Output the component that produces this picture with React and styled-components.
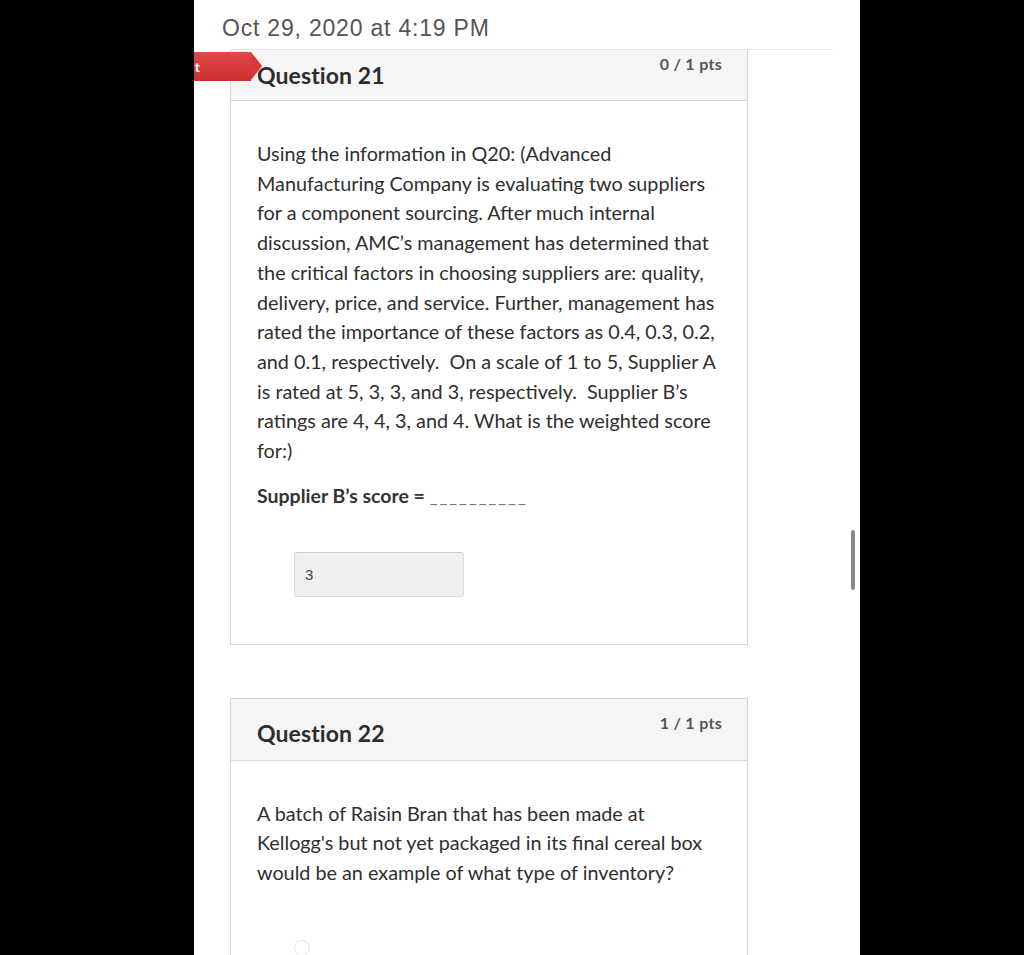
import React from 'react'
import styled, { createGlobalStyle } from 'styled-components'

const Global = createGlobalStyle`
  html, body {
    margin: 0;
    background: #000;
  }
`

const Page = styled.div`
  display: flex;
  height: 955px;
  overflow: hidden;
  background: #000;
`

const Column = styled.main`
  position: relative;
  margin-left: 194px;
  width: 666px;
  background: #fff;
  overflow: hidden;
`

const DateBar = styled.div`
  height: 41px;
  padding: 8px 0 0 28px;
  display: flex;
  align-items: center;
  font-family: 'Liberation Sans', Arial, sans-serif;
  font-size: 23px;
  letter-spacing: 0.8px;
  color: #555;
`

const Divider = styled.div`
  margin-left: 36px;
  width: 603px;
  height: 1px;
  background: #e6e6e6;
`

const Card = styled.section`
  position: relative;
  margin-left: 36px;
  width: 516px;
  border: 1px solid #d6d6d6;
  border-top: ${({ clipped }) => (clipped ? 'none' : '1px solid #d6d6d6')};
  margin-top: ${({ gap }) => gap || 0}px;
  font-family: Lato, 'Open Sans', sans-serif;
  color: #333;
`

const CardHeader = styled.header`
  display: flex;
  justify-content: space-between;
  height: ${({ clipped }) => (clipped ? 50 : 61)}px;
  padding: 0 25px 0 26px;
  background: #f5f5f5;
  border-bottom: 1px solid #d9d9d9;
`

const Title = styled.h2`
  margin: 0;
  padding-top: ${({ clipped }) => (clipped ? 11 : 20)}px;
  font-size: 23px;
  font-weight: 700;
  color: #2d2d2d;
  letter-spacing: 0.1px;
`

const Points = styled.div`
  padding-top: ${({ clipped }) => (clipped ? 4 : 14)}px;
  font-size: 16px;
  font-weight: 700;
  color: #555;
  letter-spacing: 0.3px;
`

// "Incorrect" ribbon, mostly cut off by the left edge of the column
const Flag = styled.div`
  position: absolute;
  left: -80px;
  top: 2px;
  height: 29px;
  width: 88px;
  padding-right: 12px;
  display: flex;
  align-items: center;
  justify-content: flex-end;
  background: linear-gradient(#e04a48, #c9302f);
  color: #fff;
  font-family: Lato, sans-serif;
  font-size: 14px;
  font-weight: 700;
  box-sizing: content-box;

  &::after {
    content: '';
    position: absolute;
    right: -11px;
    top: 0;
    border-top: 14.5px solid transparent;
    border-bottom: 14.5px solid transparent;
    border-left: 11px solid #d23b3a;
  }
`

const FlagText = styled.span`
  margin-right: 39px;
`

const Body = styled.div`
  padding: ${({ top }) => top}px 20px ${({ bottom }) => bottom}px 26px;
`

const Para = styled.p`
  margin: 0;
  font-size: 19.8px;
  line-height: 29.7px;
  white-space: pre;
  color: #2f2f2f;
`

const Blank = styled.p`
  margin: 15px 0 0;
  font-size: 19.5px;
  font-weight: 700;
  color: #333;
  line-height: 29px;
`

const Dashes = styled.span`
  color: #777;
  font-weight: 400;
  font-size: 17px;
  letter-spacing: 2px;
`

const Answer = styled.div`
  margin: 41px 0 0 37px;
  width: 158px;
  height: 43px;
  padding-left: 10px;
  display: flex;
  align-items: center;
  background: #efeff1;
  border: 1px solid #dcdcdc;
  border-top-color: #cfcfcf;
  border-radius: 3px;
  font-family: 'Liberation Sans', Arial, sans-serif;
  font-size: 15px;
  color: #444;
`

const Radio = styled.span`
  display: block;
  margin: 52px 0 0 37px;
  width: 14px;
  height: 14px;
  border: 1.5px solid #e2e2e2;
  border-radius: 50%;
`

const Scrollbar = styled.div`
  position: absolute;
  left: 657px;
  top: 530px;
  width: 4px;
  height: 60px;
  border-radius: 2px;
  background: #8a8a8a;
`

const q21 = [
  'Using the information in Q20: (Advanced',
  'Manufacturing Company is evaluating two suppliers',
  'for a component sourcing. After much internal',
  'discussion, AMC’s management has determined that',
  'the critical factors in choosing suppliers are: quality,',
  'delivery, price, and service. Further, management has',
  'rated the importance of these factors as 0.4, 0.3, 0.2,',
  'and 0.1, respectively.  On a scale of 1 to 5, Supplier A',
  'is rated at 5, 3, 3, and 3, respectively.  Supplier B’s',
  'ratings are 4, 4, 3, and 4. What is the weighted score',
  'for:)',
]

const q22 = [
  'A batch of Raisin Bran that has been made at',
  'Kellogg\'s but not yet packaged in its final cereal box',
  'would be an example of what type of inventory?',
]

export default function App() {
  return (
    <Page>
      <Global />
      <Column>
        <DateBar>Oct 29, 2020 at 4:19 PM</DateBar>
        <Divider />
        <Card clipped>
          <Flag>
            <FlagText>Incorrect</FlagText>
          </Flag>
          <CardHeader clipped>
            <Title clipped>Question 21</Title>
            <Points clipped>0 / 1 pts</Points>
          </CardHeader>
          <Body top={38} bottom={47}>
            <Para>{q21.join('\n')}</Para>
            <Blank>
              Supplier B’s score = <Dashes>__________</Dashes>
            </Blank>
            <Answer>3</Answer>
          </Body>
        </Card>
        <Card gap={53}>
          <CardHeader>
            <Title>Question 22</Title>
            <Points>1 / 1 pts</Points>
          </CardHeader>
          <Body top={38} bottom={40}>
            <Para>{q22.join('\n')}</Para>
            <Radio />
          </Body>
        </Card>
        <Scrollbar />
      </Column>
    </Page>
  )
}
